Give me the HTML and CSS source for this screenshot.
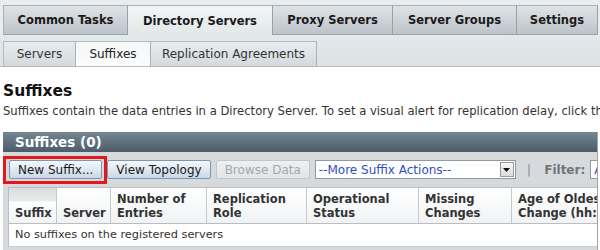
FILE: index.html
```html
<!DOCTYPE html>
<html>
<head>
<meta charset="utf-8">
<link rel="stylesheet" href="styles.css">
</head>
<body>
<div class="page">
  <div class="tabs">
    <div class="tab w1">Common Tasks</div>
    <div class="tab w2 active">Directory Servers</div>
    <div class="tab w3">Proxy Servers</div>
    <div class="tab w4">Server Groups</div>
    <div class="tab w5">Settings</div>
  </div>
  <div class="subtabs">
    <div class="subtab s1">Servers</div>
    <div class="subtab s2 active">Suffixes</div>
    <div class="subtab s3">Replication Agreements</div>
  </div>
  <div class="content">
    <h1 class="title">Suffixes</h1>
    <p class="desc">Suffixes contain the data entries in a Directory Server. To set a visual alert for replication delay, click the Replication Settings button.</p>
    <div class="panel">
      <div class="panel-title">Suffixes (0)</div>
      <div class="toolbar">
        <span class="highlight"><button class="btn">New Suffix...</button></span>
        <button class="btn">View Topology</button>
        <button class="btn disabled">Browse Data</button>
        <div class="select">
          <span class="select-text">--More Suffix Actions--</span>
          <span class="select-arrow"><svg width="7" height="4" viewBox="0 0 7 4"><path d="M0 0H7L3.5 4Z" fill="#111"/></svg></span>
        </div>
        <span class="sep">|</span>
        <span class="filter-label">Filter:</span>
        <div class="select small"><span class="select-text">All</span></div>
      </div>
      <div class="grid">
        <div class="hrow">
          <div class="th c1 sorted">Suffix</div>
          <div class="th c2">Server</div>
          <div class="th c3">Number of<br>Entries</div>
          <div class="th c4">Replication<br>Role</div>
          <div class="th c5">Operational<br>Status</div>
          <div class="th c6">Missing<br>Changes</div>
          <div class="th c7">Age of Oldest<br>Change (hh:mm:ss)</div>
        </div>
        <div class="drow">No suffixes on the registered servers</div>
      </div>
    </div>
  </div>
</div>
</body>
</html>
```
FILE: styles.css
```css
html, body {
  margin: 0;
  padding: 0;
  background: #ffffff;
  overflow: hidden;
}
body {
  width: 600px;
  height: 250px;
  font-family: "DejaVu Sans", "Liberation Sans", sans-serif;
  color: #222;
}
.page {
  width: 600px;
}
.tabs {
  display: flex;
  background: #e9ecee;
  padding: 5px 0 0 3px;
  height: 30px;
}
.tab {
  box-sizing: border-box;
  flex-shrink: 0;
  height: 30px;
  display: flex;
  align-items: center;
  justify-content: center;
  font-weight: bold;
  font-size: 11.5px;
  color: #1a1a1a;
  background: linear-gradient(#dfe3e6, #bcc3c9);
  border-top: 1px solid #a9b0b6;
  border-right: 1px solid #9aa2a9;
  border-bottom: 1px solid #9aa2a9;
}
.tab:first-child { border-left: 1px solid #a9b0b6; }
.tab.active {
  background: linear-gradient(#f3f5f6, #e2e7e9);
  border-bottom: none;
}
.w1 { width: 125px; }
.w2 { width: 145px; }
.w3 { width: 120px; }
.w4 { width: 124px; }
.w5 { width: 81px; }
.subtabs {
  display: flex;
  align-items: flex-end;
  background: linear-gradient(#e3e8ea, #dde3e5);
  height: 31px;
  padding-left: 3px;
  border-bottom: 1px solid #b4bcc2;
}
.subtab {
  box-sizing: border-box;
  flex-shrink: 0;
  height: 25px;
  display: flex;
  align-items: center;
  justify-content: center;
  font-size: 12px;
  color: #333;
  background: linear-gradient(#e8ecee, #d3d9dd);
  border-top: 1px solid #b4bcc2;
  border-right: 1px solid #aab2b8;
}
.subtab:first-child { border-left: 1px solid #b4bcc2; }
.subtab.active {
  background: linear-gradient(#f4f6f7, #fbfcfc);
  color: #222;
}
.s1 { width: 73px; }
.s2 { width: 75px; }
.s3 { width: 166px; }
.content {
  padding: 0 0 0 3px;
}
.title {
  margin: 0;
  padding-top: 14px;
  font-size: 15.5px;
  line-height: 20px;
  font-weight: bold;
  color: #111;
}
.desc {
  margin: 2px 0 0 0;
  font-size: 11.6px;
  line-height: 16px;
  color: #333;
  white-space: nowrap;
}
.panel {
  margin-top: 13px;
  width: 594px;
  background: #d6dadd;
  border-right: 1px solid #9ea6ac;
  height: 118px;
  overflow: hidden;
}
.panel-title {
  height: 20px;
  line-height: 20px;
  padding-left: 12px;
  background: linear-gradient(#748692, #4c5d69);
  color: #fff;
  font-weight: bold;
  font-size: 13.5px;
}
.toolbar {
  display: flex;
  align-items: center;
  height: 35px;
  padding-left: 6px;
  gap: 5px;
  white-space: nowrap;
}
.toolbar > * { flex-shrink: 0; }
.highlight {
  position: relative;
  display: inline-flex;
}
.highlight::after {
  content: "";
  position: absolute;
  left: -6px;
  top: -4px;
  right: -5px;
  bottom: -5px;
  border: 3px solid #e3171c;
}
.btn {
  font-family: "DejaVu Sans", "Liberation Sans", sans-serif;
  font-size: 12px;
  height: 19px;
  padding: 0 8px;
  color: #1a1a1a;
  background: linear-gradient(#f4f8fb, #c9d9e7);
  border: 1px solid #7b98b2;
  border-radius: 2px;
}
.btn.disabled {
  color: #a3a7ab;
  background: linear-gradient(#eef0f1, #e2e5e7);
  border-color: #c2c7cb;
}
.select {
  box-sizing: border-box;
  display: flex;
  align-items: center;
  justify-content: space-between;
  width: 201px;
  height: 19px;
  background: #fff;
  border: 1px solid #8d9ba6;
  padding-left: 3px;
  font-size: 12px;
  color: #2f4fbf;
}
.select-arrow {
  box-sizing: border-box;
  width: 14px;
  height: 15px;
  margin-right: 1px;
  display: flex;
  align-items: center;
  justify-content: center;
  background: linear-gradient(#f6f6f6, #dcdcdc);
  border: 1px solid #9a9a9a;
}
.sep {
  color: #8a9299;
  font-size: 13px;
  margin: 0 8px 0 6px;
}
.filter-label {
  font-weight: bold;
  font-size: 12px;
  color: #6f7579;
}
.select.small {
  width: 60px;
  margin-left: 0;
}
.grid {
  margin-left: 5px;
  width: 620px;
  background: #fff;
  border-top: 1px solid #b8bfc4;
  border-left: 1px solid #b8bfc4;
}
.hrow {
  display: flex;
  height: 35px;
  border-bottom: 1px solid #b8bfc4;
}
.th {
  box-sizing: border-box;
  flex-shrink: 0;
  display: flex;
  align-items: flex-end;
  padding: 0 0 3px 6px;
  font-weight: bold;
  font-size: 11.5px;
  line-height: 14px;
  color: #333;
  background: linear-gradient(#ffffff, #f0f2f3);
  border-right: 1px solid #c3c9cd;
  white-space: nowrap;
  overflow: hidden;
}
.th.sorted {
  background: linear-gradient(#d9dcde 0, #e9ebec 13px, #ffffff 14px, #f0f2f3 100%);
}
.c1 { width: 48px; }
.c2 { width: 54px; }
.c3 { width: 96px; }
.c4 { width: 100px; }
.c5 { width: 112px; }
.c6 { width: 93px; }
.c7 { width: 110px; }
.drow {
  height: 22px;
  line-height: 22px;
  padding-left: 6px;
  font-size: 11.3px;
  color: #333;
  border-bottom: 1px solid #c8cdd1;
}
```
